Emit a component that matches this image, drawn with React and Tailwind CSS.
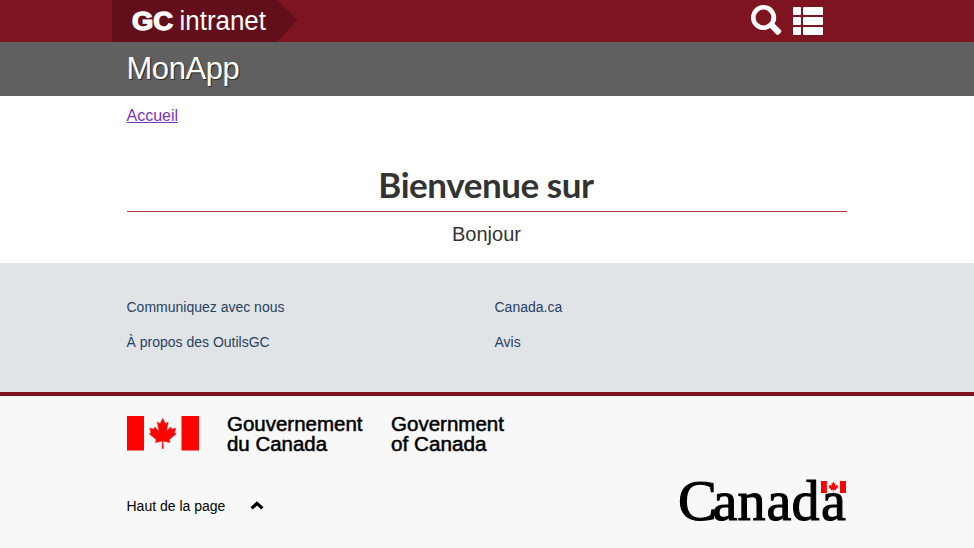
const LEAF =
  'm4890 4430-45-863a95 95 0 0 1 111-98l859 151-116-320a65 65 0 0 1 20-73l941-762-212-99a65 65 0 0 1-34-79l186-572-542 115a65 65 0 0 1-73-38l-105-247-423 454a65 65 0 0 1-111-57l204-1052-327 189a65 65 0 0 1-91-27l-332-652-332 652a65 65 0 0 1-91 27l-327-189 204 1052a65 65 0 0 1-111 57l-423-454-105 247a65 65 0 0 1-73 38l-542-115 186 572a65 65 0 0 1-34 79l-212 99 941 762a65 65 0 0 1 20 73l-116 320 859-151a95 95 0 0 1 111 98l-45 863z';

function Flag({ className }) {
  return (
    <svg viewBox="0 0 9600 4600" preserveAspectRatio="none" className={className} fill="#ff0000">
      <path d="M0 0h2270v4600H0zM7270 0h2330v4600H7270z" />
      <path d={LEAF} stroke="#ff0000" strokeWidth="60" transform="translate(110 -90) scale(.97 1)" />
    </svg>
  );
}

function TopBar() {
  return (
    <div className="h-[42px] bg-[#7f1421]">
      <div className="mx-auto flex h-full w-[750px] items-center">
        <a className="flex h-full w-[186px] items-center bg-[#620f1b] pl-5 [clip-path:polygon(0_0,165px_0,185.5px_20px,165px_100%,0_100%)]">
          <svg width="145" height="42" className="shrink-0 fill-white">
            <text x="0" y="30" textLength="41" lengthAdjust="spacingAndGlyphs" stroke="#fff" strokeWidth="1.3" className='font-["Liberation_Sans",Arial,sans-serif] text-[25px] font-bold'>GC</text>
            <text x="47.5" y="30" textLength="86.5" lengthAdjust="spacingAndGlyphs" className='font-["Liberation_Sans",Arial,sans-serif] text-[27px]'>intranet</text>
          </svg>
        </a>
        <svg width="74" height="42" className="ml-auto mr-[38px] fill-white">
          <path fillRule="evenodd" d="M13.5 5a12.5 12.5 0 1 0 6.6 23.1l6.3 6.3q1.2 1.2 2.4 0l2-2q1.2-1.2 0-2.4l-6.3-6.3A12.5 12.5 0 0 0 13.5 5zm0 4.6a7.9 7.9 0 1 1 0 15.800a7.900 7.900 0 0 1 0-15.800z" />
          <rect x="43" y="7" width="8" height="8" rx=".8" />
          <rect x="53" y="7" width="20" height="8" rx=".8" />
          <rect x="43" y="17" width="8" height="8" rx=".8" />
          <rect x="53" y="17" width="20" height="8" rx=".8" />
          <rect x="43" y="27" width="8" height="8" rx=".8" />
          <rect x="53" y="27" width="20" height="8" rx=".8" />
        </svg>
      </div>
    </div>
  );
}

function FooterLinks() {
  return (
    <nav className="h-[129px] bg-[#e1e4e7] pt-[34px] text-sm text-[#284162]">
      <div className="mx-auto grid w-[721px] grid-cols-[368px_1fr] gap-y-[15px] leading-5">
        <a>Communiquez avec nous</a>
        <a>Canada.ca</a>
        <a>À propos des OutilsGC</a>
        <a>Avis</a>
      </div>
    </nav>
  );
}

function Signature() {
  const type = 'font-["Liberation_Sans",Arial,sans-serif] text-[19.5px]';
  return (
    <div className="flex h-[36px] items-start">
      <Flag className="h-[34.5px] w-[72px]" />
      <svg width="300" height="40" className="ml-7 overflow-visible" stroke="#000" strokeWidth=".5">
        <text x="0" y="15" textLength="135.5" lengthAdjust="spacingAndGlyphs" className={type}>Gouvernement</text>
        <text x="0" y="34.5" textLength="100" lengthAdjust="spacingAndGlyphs" className={type}>du Canada</text>
        <text x="164" y="15" textLength="113" lengthAdjust="spacingAndGlyphs" className={type}>Government</text>
        <text x="164" y="34.5" textLength="95.5" lengthAdjust="spacingAndGlyphs" className={type}>of Canada</text>
      </svg>
    </div>
  );
}

function Wordmark() {
  return (
    <div className="relative ml-auto h-[44px] w-[169px]">
      <svg width="169" height="44" className="overflow-visible" stroke="#000">
        <text x="0" y="40.5" textLength="39" lengthAdjust="spacingAndGlyphs" strokeWidth="1.1" className='font-["Liberation_Serif",serif] text-[57px]'>C</text>
        <text x="34.5 59.5 88.5 113.5 143" y="41" strokeWidth="1.1" className='font-["Liberation_Serif",serif] text-[56px]'>anada</text>
      </svg>
      <Flag className="absolute left-[143px] top-[2px] h-3 w-[25px]" />
    </div>
  );
}

export default function App() {
  return (
    <div className={'h-[548px] w-full overflow-hidden bg-white font-["Liberation_Sans",Arial,sans-serif] text-[#333]'}>
      <header>
        <TopBar />
        <div className="h-[54px] bg-[#606060]">
          <div className="mx-auto w-[721px] pt-[5px] text-[31px] leading-[44px] tracking-[-0.45px] text-white [text-shadow:1px_1px_1px_#222]">MonApp</div>
        </div>
        <div className="mx-auto h-[67px] w-[721px] pt-2 text-base leading-6 text-[#7834bc]">
          <a className="underline">Accueil</a>
        </div>
      </header>
      <main className="mx-auto h-[100px] w-[720px] text-center">
        <h1 className='h-[49px] border-b border-[#af3c43] pr-0.5 font-["Lato",sans-serif] text-[35px] font-bold leading-[43px] tracking-[-0.45px]'>Bienvenue sur</h1>
        <p className="pr-px pt-[7px] text-xl leading-[30px]">Bonjour</p>
      </main>
      <footer>
        <FooterLinks />
        <div className="h-[156px] border-t-4 border-[#7f1421] bg-[#f8f8f8]">
          <div className="mx-auto w-[720px] pt-5 text-black">
            <Signature />
            <div className="flex pt-[27px]">
              <a className="-ml-[0.5px] mt-[17px] flex h-5 items-center text-sm leading-5">
                Haut de la page
                <svg width="14" height="10" viewBox="0 0 14 10" className="ml-[25px]">
                  <path d="M1.600 7.400 7 2.400l5.400 5" fill="none" stroke="#000" strokeWidth="3.300" />
                </svg>
              </a>
              <Wordmark />
            </div>
          </div>
        </div>
      </footer>
    </div>
  );
}
